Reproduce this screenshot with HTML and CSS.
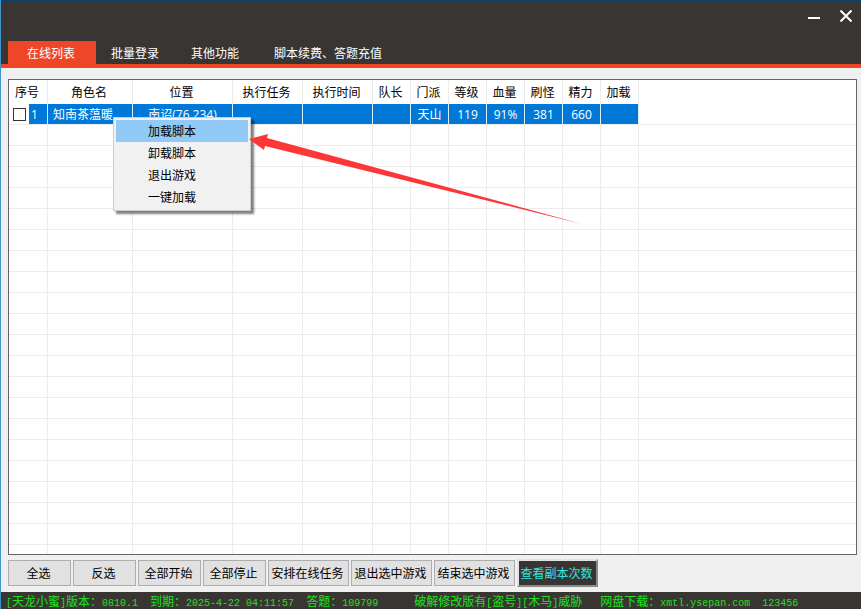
FILE: index.html
```html
<!DOCTYPE html>
<html lang="zh-CN">
<head>
	<title>天龙小蜜</title>
	<meta charset="UTF-8">
	<meta name="viewport" content="width=device-width, initial-scale=1.0">
	<link rel="stylesheet" href="styles.css">
</head>
<body>
	<header class="titlebar">
		<div class="window-controls">
			<button type="button" aria-label="最小化">
				<svg width="12" height="12" viewBox="0 0 12 12"><path d="M0 8H12" stroke="#fff" stroke-width="2"/></svg>
			</button>
			<button type="button" aria-label="关闭">
				<svg width="12" height="12" viewBox="0 0 12 12"><path d="M0.5 0.5L11.5 11.5M11.5 0.5L0.5 11.5" stroke="#fff" stroke-width="2"/></svg>
			</button>
		</div>
		<nav class="tabs">
			<button type="button" class="tab active">在线列表</button>
			<button type="button" class="tab">批量登录</button>
			<button type="button" class="tab">其他功能</button>
			<button type="button" class="tab wide">脚本续费、答题充值</button>
		</nav>
	</header>

	<main class="content">
		<div class="list">
			<table>
				<colgroup>
					<col class="c-index"><col class="c-name"><col class="c-place">
					<col class="c-task"><col class="c-task">
					<col class="c-stat" span="7">
					<col>
				</colgroup>
				<thead>
					<tr>
						<th>序号</th><th>角色名</th><th>位置</th><th>执行任务</th><th>执行时间</th><th>队长</th><th>门派</th><th>等级</th><th>血量</th><th>刷怪</th><th>精力</th><th>加载</th><td></td>
					</tr>
				</thead>
				<tbody>
					<tr class="selected">
						<td class="index"><div class="index-cell"><input type="checkbox" id="row1"><label for="row1">1</label></div></td>
						<td class="name">知南茶蕰暖</td>
						<td>南诏(76,234)</td>
						<td></td>
						<td></td>
						<td></td>
						<td>天山</td>
						<td>119</td>
						<td>91%</td>
						<td>381</td>
						<td>660</td>
						<td></td>
						<td class="rest"></td>
					</tr>
					<tr class="empty">
						<td></td><td></td><td></td><td></td><td></td><td></td><td></td><td></td><td></td><td></td><td></td><td></td><td></td>
					</tr>
				</tbody>
			</table>

			<div class="menu" role="menu">
				<button type="button" role="menuitem" class="current">加载脚本</button>
				<button type="button" role="menuitem">卸载脚本</button>
				<button type="button" role="menuitem">退出游戏</button>
				<button type="button" role="menuitem">一键加载</button>
			</div>

			<svg class="arrow" width="334" height="92" viewBox="0 0 334 92">
				<path d="M0 6L19 1L18 5L333 91L16 13L15 17Z" fill="#fd3637"/>
			</svg>
		</div>

		<div class="actions">
			<button type="button">全选</button>
			<button type="button">反选</button>
			<button type="button">全部开始</button>
			<button type="button">全部停止</button>
			<button type="button" class="long">安排在线任务</button>
			<button type="button" class="long">退出选中游戏</button>
			<button type="button" class="long">结束选中游戏</button>
			<button type="button" class="long dark">查看副本次数</button>
		</div>
	</main>

	<footer class="status">
		<span><i>[</i>天龙小蜜<i>]</i>版本：<i>0810.1</i></span>
		<span>到期：<i>2025-4-22 04:11:57</i></span>
		<span>答题：<i>109799</i></span>
		<span class="notice">破解修改版有<i>[</i>盗号<i>][</i>木马<i>]</i>威胁</span>
		<span>网盘下载：<i>xmtl.ysepan.com</i></span>
		<span><i>123456</i></span>
	</footer>
</body>
</html>
```

FILE: styles.css
```css
* {
	box-sizing: border-box;
}

body {
	display: flex;
	flex-direction: column;
	height: 100vh;
	margin: 0;
	border-left: 1px solid #3c96c8;
	background-color: #f0f0f0;
	font-family: "Open Sans", "Noto Sans CJK SC", sans-serif;
	font-size: 12px;
	line-height: 20px;
	overflow: hidden;
}

button {
	margin: 0;
	padding: 0;
	border: none;
	border-radius: 0;
	background: none;
	color: inherit;
	font: inherit;
	white-space: nowrap;
}

/* title bar */
.titlebar {
	border-top: 1px solid #0b406c;
	border-bottom: 4px solid #ee4728;
	background-color: #383533;
	color: #fff;
}

.window-controls {
	display: flex;
	justify-content: flex-end;
	align-items: center;
	gap: 20px;
	height: 40px;
	padding: 0 9px 10px 0;
}

.window-controls svg {
	display: block;
}

.tabs {
	display: flex;
	padding-left: 7px;
}

.tab {
	height: 23px;
	padding: 2px 17px 0 15px;
}

.tab.active {
	padding: 2px 21px 0 19px;
	background-color: #ee4728;
}

.tab.wide {
	padding: 2px 20px 0 18px;
}

.content {
	display: flex;
	flex: 1;
	flex-direction: column;
	gap: 4px;
	min-height: 0;
	padding: 11px 4px 5px 7px;
}

/* account list */
.list {
	position: relative;
	flex: 1;
	min-height: 0;
	border: 1px solid #646464;
	background-color: #fff;
}

table {
	width: 100%;
	height: 100%;
	border-spacing: 0;
	table-layout: fixed;
}

.c-index {
	width: 39px;
}

.c-name {
	width: 85px;
}

.c-place {
	width: 100px;
}

.c-task {
	width: 70px;
}

.c-stat {
	width: 38px;
}

th, td {
	padding: 0;
	border-right: 1px solid #ececec;
	text-align: center;
	white-space: nowrap;
}

th {
	height: 24px;
	padding: 2px 2px 0 0;
	font-weight: normal;
}

th:last-child, td:last-child {
	border-right: none;
}

.selected td {
	height: 21px;
	border-right-color: #d9edfb;
	border-bottom: 1px solid #ececec;
	background-color: #0078d7;
	color: #fff;
	line-height: 18px;
	padding-top: 2px;
}

.selected td.rest {
	background-color: #fff;
}

.selected td.index {
	padding-top: 0;
}

.selected td.name {
	padding-left: 5px;
	text-align: left;
}

.index-cell {
	display: flex;
	align-items: center;
	height: 20px;
	padding-left: 4px;
	background: linear-gradient(to right, #fff 20px, #0078d7 20px);
}

.index-cell input {
	appearance: none;
	width: 13px;
	height: 13px;
	margin: 0 5px 0 0;
	border: 1px solid #333;
	background-color: #fff;
}

.index-cell label {
	padding-top: 2px;
}

.empty {
	background-image: repeating-linear-gradient(to bottom, transparent 0, transparent 20px, #ececec 20px, #ececec 21px);
}

/* context menu */
.menu {
	position: absolute;
	top: 37px;
	left: 104px;
	display: flex;
	flex-direction: column;
	width: 138px;
	padding: 2px;
	border: 1px solid #ccc;
	background-color: #f1f1f1;
	box-shadow: 3px 3px 2px rgba(0, 0, 0, 0.5);
}

.menu button {
	height: 22px;
	padding: 1px 0 0 32px;
	text-align: left;
}

.menu .current {
	background-color: #91c9f7;
}

.arrow {
	position: absolute;
	top: 53px;
	left: 240px;
}

/* bottom buttons */
.actions {
	display: flex;
	align-items: center;
	gap: 2px;
	height: 28px;
}

.actions button {
	width: 63px;
	height: 26px;
	padding: 2px 2px 0 0;
	border: 1px solid #adadad;
	background-color: #e1e1e1;
}

.actions .long {
	width: 81px;
}

.actions .dark {
	height: 28px;
	border: 2px solid;
	border-color: #e3e3e3 #8a8a8a #8a8a8a #e3e3e3;
	background-color: #383533;
	color: #2ee6e6;
}

.status {
	display: flex;
	gap: 12px;
	height: 17px;
	padding: 1px 0 0 5px;
	background-color: #383533;
	color: #1fe01f;
	line-height: 17px;
	white-space: nowrap;
	overflow: hidden;
}

.status i {
	font-family: "Liberation Mono", monospace;
	font-size: 10px;
	font-style: normal;
}

.status .notice {
	margin: 0 6px 0 24px;
}
```
